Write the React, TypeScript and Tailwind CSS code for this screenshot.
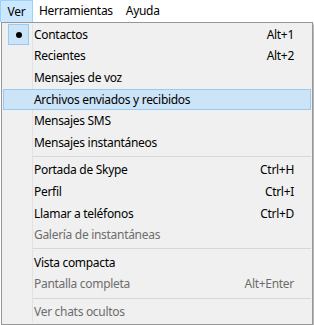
type Item = { label: string; shortcut?: string; disabled?: boolean; checked?: boolean; active?: boolean } | 'sep';

const items: Item[] = [
  { label: 'Contactos', shortcut: 'Alt+1', checked: true },
  { label: 'Recientes', shortcut: 'Alt+2' },
  { label: 'Mensajes de voz' },
  { label: 'Archivos enviados y recibidos', active: true },
  { label: 'Mensajes SMS' },
  { label: 'Mensajes instantáneos' },
  'sep',
  { label: 'Portada de Skype', shortcut: 'Ctrl+H' },
  { label: 'Perfil', shortcut: 'Ctrl+I' },
  { label: 'Llamar a teléfonos', shortcut: 'Ctrl+D' },
  { label: 'Galería de instantáneas', disabled: true },
  'sep',
  { label: 'Vista compacta' },
  { label: 'Pantalla completa', shortcut: 'Alt+Enter', disabled: true },
  'sep',
  { label: 'Ver chats ocultos', disabled: true },
];

function MenuRow({ item }: { item: Exclude<Item, 'sep'> }) {
  return (
    <div
      className={`relative flex h-[21.6px] items-center border ${
        item.active ? 'border-[#99c9ef] bg-[#cce4f7]' : 'border-transparent'
      } ${item.disabled ? 'text-[#6d6d6d]' : 'text-black'}`}
    >
      <div className="flex w-[29px] shrink-0 items-center justify-center">
        {item.checked && (
          <div className="flex h-[21px] w-[21px] items-center justify-center border border-[#99c9ef] bg-[#cce4f7]">
            <div className="h-[6px] w-[6px] rounded-full bg-black" />
          </div>
        )}
      </div>
      <span className="pl-[1px]">{item.label}</span>
      {item.shortcut && <span className="ml-auto pr-[16px]">{item.shortcut}</span>}
    </div>
  );
}

export default function App() {
  return (
    <div className="h-[325px] w-[314px] overflow-hidden bg-white font-['Noto_Sans','Liberation_Sans',sans-serif] text-[12px] leading-none tracking-[-0.3px]">
      {/* menu bar */}
      <div className="flex h-[22px] items-stretch bg-white">
        <div className="flex w-[33px] items-center justify-center border border-b-0 border-[#99d1ff] bg-[#cce8ff]">Ver</div>
        <div className="flex items-center pl-[6px] pr-[9px]">Herramientas</div>
        <div className="flex items-center px-[4px]">Ayuda</div>
      </div>
      {/* dropdown */}
      <div className="ml-[1px] flex w-[312px] flex-col border border-[#979797] bg-[#f0f0f0] p-[1px] shadow-[2px_2px_2px_rgba(0,0,0,0.3)]">
        <div className="relative">
          <div className="absolute top-0 bottom-0 left-[29px] w-px bg-[#e2e2e2]" />
          {items.map((item, i) =>
            item === 'sep' ? (
              <div key={i} className="flex h-[6px] items-center pl-[29px]">
                <div className="h-px w-full bg-[#d7d7d7]" />
              </div>
            ) : (
              <MenuRow key={i} item={item} />
            )
          )}
        </div>
      </div>
    </div>
  );
}
